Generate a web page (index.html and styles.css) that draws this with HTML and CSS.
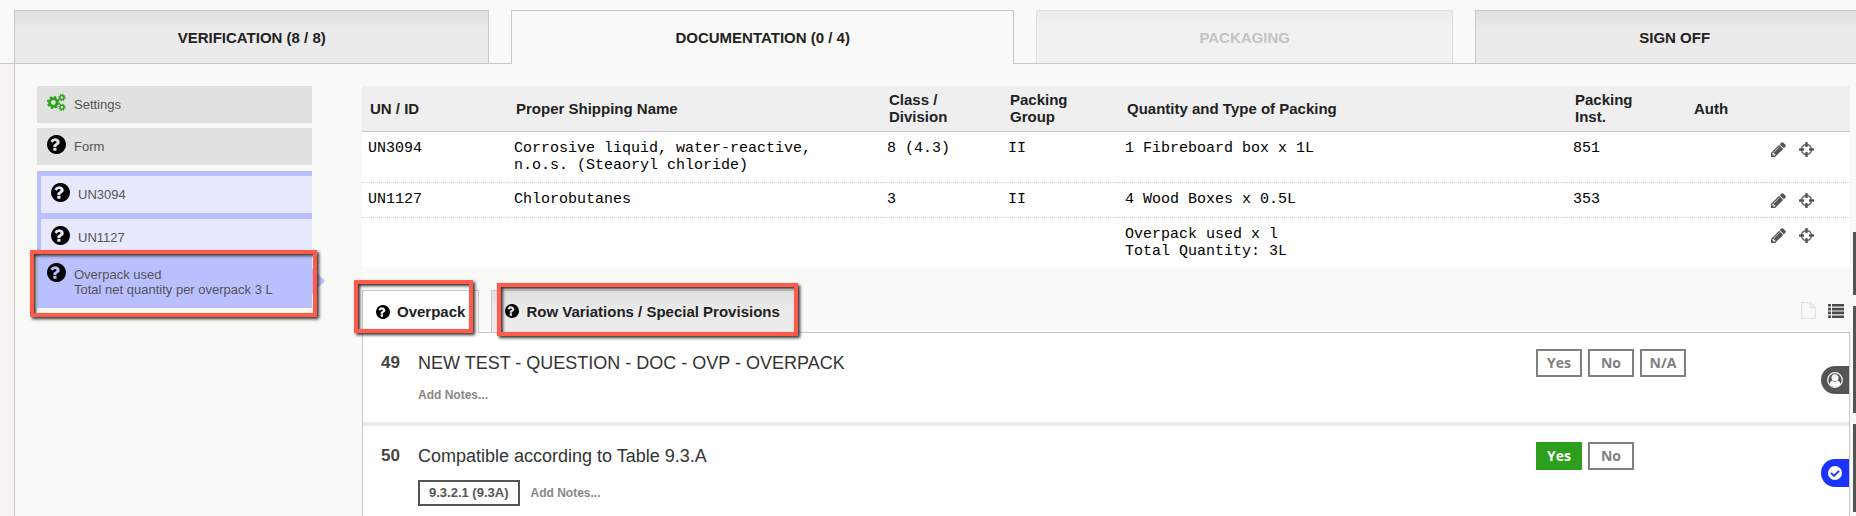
FILE: index.html
```
<!DOCTYPE html>
<html lang="en">
<head>
  <meta charset="UTF-8" />
  <title>Documentation</title>
  <link rel="stylesheet" href="styles.css">
</head>
<body>

  <!-- Icons -->
  <svg class="icon-defs" aria-hidden="true">
    <symbol id="i-question" viewBox="128 128 1536 1536">
      <path d="M896 1376v-192q0-14-9-23t-23-9h-192q-14 0-23 9t-9 23v192q0 14 9 23t23 9h192q14 0 23-9t9-23zm256-672q0-88-55.500-163t-138.500-116-170-41q-243 0-371 213-15 24 8 42l132 100q7 6 19 6 16 0 25-12 53-68 86-92 34-24 86-24 48 0 85.500 26t37.500 59q0 38-20 61t-68 45q-63 28-115.500 86.500t-52.500 125.500v36q0 14 9 23t23 9h192q14 0 23-9t9-23q0-19 21.500-49.500t54.500-49.500q32-18 49-28.500t46-35 44.500-48 28-60.500 12.500-81zm512 192q0 209-103 385.500t-279.500 279.500-385.500 103-385.500-103-279.500-279.500-103-385.500 103-385.500 279.500-279.500 385.500-103 385.500 103 279.500 279.500 103 385.500z"/>
    </symbol>
    <symbol id="i-pencil" viewBox="128 128 1536 1536">
      <path d="M491 1536l91-91-235-235-91 91v107h128v128h107zm523-928q0-22-22-22-10 0-17 7l-542 542q-7 7-7 17 0 22 22 22 10 0 17-7l542-542q7-7 7-17zm-54-192l416 416-832 832h-416v-416zm683 96q0 53-37 90l-166 166-416-416 166-165q36-38 90-38 53 0 91 38l235 234q37 39 37 91z"/>
    </symbol>
    <symbol id="i-target" viewBox="128 128 1536 1536">
      <path d="M1325 1024h-109q-26 0-45-19t-19-45v-128q0-26 19-45t45-19h109q-32-108-112.500-188.500t-188.500-112.500v109q0 26-19 45t-45 19h-128q-26 0-45-19t-19-45v-109q-108 32-188.500 112.500t-112.500 188.500h109q26 0 45 19t19 45v128q0 26-19 45t-45 19h-109q32 108 112.500 188.500t188.500 112.500v-109q0-26 19-45t45-19h128q26 0 45 19t19 45v109q108-32 188.500-112.500t112.500-188.500zm339-192v128q0 26-19 45t-45 19h-143q-37 161-154.500 278.500t-278.500 154.500v143q0 26-19 45t-45 19h-128q-26 0-45-19t-19-45v-143q-161-37-278.500-154.500t-154.500-278.500h-143q-26 0-45-19t-19-45v-128q0-26 19-45t45-19h143q37-161 154.500-278.500t278.500-154.500v-143q0-26 19-45t45-19h128q26 0 45 19t19 45v143q161 37 278.500 154.500t154.500 278.500h143q26 0 45 19t19 45z"/>
    </symbol>
    <symbol id="i-cogs" viewBox="0 0 21 19">
      <g fill="none" stroke="currentColor">
        <circle cx="7" cy="9.500" r="4.200" stroke-width="3"/>
        <circle cx="7" cy="9.500" r="6.200" stroke-width="2" stroke-dasharray="2.430 2.440"/>
        <circle cx="16.500" cy="4" r="2.200" stroke-width="1.600"/>
        <circle cx="16.500" cy="4" r="3.400" stroke-width="1.400" stroke-dasharray="1.330 1.340"/>
        <circle cx="16.500" cy="14.800" r="2.200" stroke-width="1.600"/>
        <circle cx="16.500" cy="14.800" r="3.400" stroke-width="1.400" stroke-dasharray="1.330 1.340"/>
      </g>
    </symbol>
    <symbol id="i-file" viewBox="0 0 15 17">
      <path d="M.7 .7h8.600l5 5v10.600H.7zM9.300 .7v5h5" fill="none" stroke="currentColor" stroke-width="1.300"/>
    </symbol>
    <symbol id="i-list" viewBox="0 0 16 14">
      <path d="M0 0h3v2.600H0zM4 0h12v2.600H4zM0 3.800h3v2.600H0zM4 3.800h12v2.600H4zM0 7.600h3v2.600H0zM4 7.600h12v2.600H4zM0 11.400h3V14H0zM4 11.400h12V14H4z"/>
    </symbol>
    <symbol id="i-user" viewBox="0 0 16 16">
      <circle cx="8" cy="8" r="7.300" fill="none" stroke="currentColor" stroke-width="1.200"/>
      <circle cx="8" cy="5.700" r="3.500"/>
      <path d="M2.600 12.300q.3-3.400 2.800-3.500 2.600 1.800 5.200 0 2.500.1 2.800 3.500Q11.300 15 8 15t-5.400-2.700z"/>
    </symbol>
    <symbol id="i-check" viewBox="0 0 14 14">
      <circle cx="7" cy="7" r="7"/>
      <path class="tick" d="M3 6.900l3 3 5-5"/>
    </symbol>
  </svg>

  <!-- Steps -->
  <nav class="steps">
    <a class="step" href="#verification">VERIFICATION (8 / 8)</a>
    <a class="step active" href="#documentation">DOCUMENTATION (0 / 4)</a>
    <a class="step disabled" href="#packaging">PACKAGING</a>
    <a class="step" href="#signoff">SIGN OFF</a>
  </nav>

  <div class="layout">
    <!-- Left menu -->
    <aside class="sidebar">
      <a class="side-item" href="#settings"><svg class="icon cogs"><use href="#i-cogs"/></svg><span>Settings</span></a>
      <a class="side-item" href="#form"><svg class="icon"><use href="#i-question"/></svg><span>Form</span></a>
      <div class="group">
        <a class="side-item" href="#un3094"><svg class="icon"><use href="#i-question"/></svg><span>UN3094</span></a>
        <a class="side-item" href="#un1127"><svg class="icon"><use href="#i-question"/></svg><span>UN1127</span></a>
      </div>
      <a class="side-item current" href="#overpack">
        <svg class="icon"><use href="#i-question"/></svg>
        <span>Overpack used<br>Total net quantity per overpack 3 L</span>
        <i class="mark mark-side"></i>
      </a>
    </aside>

    <main class="content">
      <table class="goods">
        <colgroup>
          <col class="c-un"><col class="c-name"><col class="c-class"><col class="c-group"><col><col class="c-inst"><col class="c-auth"><col class="c-tools">
        </colgroup>
        <thead>
          <tr>
            <th>UN / ID</th>
            <th>Proper Shipping Name</th>
            <th>Class /<br>Division</th>
            <th>Packing<br>Group</th>
            <th>Quantity and Type of Packing</th>
            <th>Packing<br>Inst.</th>
            <th>Auth</th>
            <th></th>
          </tr>
        </thead>
        <tbody>
          <tr>
            <td>UN3094</td>
            <td>Corrosive liquid, water-reactive,<br>n.o.s. (Steaoryl chloride)</td>
            <td>8 (4.3)</td>
            <td>II</td>
            <td>1 Fibreboard box x 1L</td>
            <td>851</td>
            <td></td>
            <td>
              <div class="tools">
                <button aria-label="Edit"><svg><use href="#i-pencil"/></svg></button>
                <button aria-label="Locate"><svg><use href="#i-target"/></svg></button>
              </div>
            </td>
          </tr>
          <tr>
            <td>UN1127</td>
            <td>Chlorobutanes</td>
            <td>3</td>
            <td>II</td>
            <td>4 Wood Boxes x 0.5L</td>
            <td>353</td>
            <td></td>
            <td>
              <div class="tools">
                <button aria-label="Edit"><svg><use href="#i-pencil"/></svg></button>
                <button aria-label="Locate"><svg><use href="#i-target"/></svg></button>
              </div>
            </td>
          </tr>
          <tr>
            <td></td>
            <td></td>
            <td></td>
            <td></td>
            <td>Overpack used x l<br>Total Quantity: 3L</td>
            <td></td>
            <td></td>
            <td>
              <div class="tools">
                <button aria-label="Edit"><svg><use href="#i-pencil"/></svg></button>
                <button aria-label="Locate"><svg><use href="#i-target"/></svg></button>
              </div>
            </td>
          </tr>
        </tbody>
      </table>

      <!-- Question tabs -->
      <div class="tabs">
        <button class="tab active"><svg><use href="#i-question"/></svg>Overpack<i class="mark mark-overpack"></i></button>
        <button class="tab tab-row"><svg><use href="#i-question"/></svg>Row Variations / Special Provisions<i class="mark mark-row"></i></button>
        <div class="views">
          <button class="view-file" aria-label="Document"><svg><use href="#i-file"/></svg></button>
          <button class="view-list" aria-label="List"><svg><use href="#i-list"/></svg></button>
        </div>
      </div>

      <div class="panel">
        <section class="question">
          <div class="number">49</div>
          <div class="text">
            <div class="title">NEW TEST - QUESTION - DOC - OVP - OVERPACK</div>
            <div class="notes"><a href="#notes49">Add Notes...</a></div>
          </div>
          <div class="answers">
            <button>Yes</button>
            <button>No</button>
            <button>N/A</button>
          </div>
          <div class="status"><svg><use href="#i-user"/></svg></div>
        </section>
        <section class="question">
          <div class="number">50</div>
          <div class="text">
            <div class="title">Compatible according to Table 9.3.A</div>
            <div class="notes"><button class="ref">9.3.2.1 (9.3A)</button><a href="#notes50">Add Notes...</a></div>
          </div>
          <div class="answers">
            <button class="yes">Yes</button>
            <button>No</button>
          </div>
          <div class="status done"><svg><use href="#i-check"/></svg></div>
        </section>
      </div>
    </main>
  </div>

  <!-- Drawer handles on the window edge -->
  <div class="handles">
    <div class="handle h-top"></div>
    <div class="handle h-mid"></div>
    <div class="handle h-low"></div>
  </div>

</body>
</html>
```
FILE: styles.css
```
* {
  box-sizing: border-box;
}

body {
  margin: 0;
  height: 100vh;
  display: flex;
  flex-direction: column;
  overflow: hidden;
  position: relative;
  font-family: "Liberation Sans", Arial, sans-serif;
  font-size: 13px;
  color: #222;
  background: #f4f3ef;
}

a {
  color: inherit;
  text-decoration: none;
}

button {
  font: inherit;
  color: inherit;
  background: none;
  border: none;
  padding: 0;
  cursor: pointer;
}

svg {
  display: block;
  fill: currentColor;
  flex: none;
}

.icon-defs {
  position: absolute;
  width: 0;
  height: 0;
}

/* Steps */
.steps {
  display: grid;
  grid-template-columns: 476fr 503fr 418fr 399fr;
  gap: 22px;
  padding: 10px 0 0 14px;
  /* the last step runs off the right edge */
  margin-right: -18px;
  background: #f9f9f7;
  border-bottom: 1px solid #c8c8c8;
}

.step {
  height: 53px;
  line-height: 54px;
  text-align: center;
  font-size: 15px;
  font-weight: bold;
  border: 1px solid #c8c8c8;
  border-bottom: none;
  background: linear-gradient(#dfdfdf, #ebebeb 18px);
}

.step.active {
  height: 54px;
  margin-bottom: -1px;
  background: #f9f9f7;
}

.step.disabled {
  color: #c4c4c4;
  border-color: #e0e0de;
  background: linear-gradient(#ebebea, #f1f1ef 18px);
}

.layout {
  flex: 1;
  display: flex;
  gap: 50px;
  margin-left: 14px;
  padding: 22px 6px 0 22px;
  border-left: 1px solid #c8c8c8;
  background: #f9f9f7;
}

/* Left menu */
.sidebar {
  width: 275px;
  flex: none;
  color: #555;
  line-height: 15px;
}

.side-item {
  display: flex;
  align-items: flex-start;
  gap: 8px;
  height: 37px;
  padding: 7px 10px;
  margin-bottom: 5px;
  background: #e1e1e1;
}

.side-item span {
  padding-top: 4px;
}

.icon {
  width: 19px;
  height: 19px;
  color: #000;
}

.icon.cogs {
  color: #2ca01c;
}

.group {
  display: grid;
  gap: 6px;
  margin-top: 6px;
  padding: 5px 0 0 4px;
  background: #b9bfff;
}

.group .side-item {
  margin: 0;
  background: #e7eaff;
}

.side-item.current {
  position: relative;
  height: 52px;
  background: #b9bfff;
}

.side-item.current::after {
  content: '';
  position: absolute;
  left: 100%;
  top: 12px;
  border: 13px solid transparent;
  border-left-color: #b9bfff;
  border-right: none;
}

/* Red highlight frames */
.mark {
  position: absolute;
  z-index: 2;
  border: 4px solid #ff5a4a;
  box-shadow: 2px 2px 3px #333, inset 2px 2px 3px #333;
  pointer-events: none;
}

.mark-side {
  inset: -6px -5px -9px -7px;
}

.mark-overpack {
  inset: -11px 5px 0 -9px;
}

.mark-row {
  inset: -8px 0 -4px 5px;
}

.content {
  flex: 1;
  min-width: 0;
  display: flex;
  flex-direction: column;
}

/* Goods table */
.goods {
  width: 100%;
  table-layout: fixed;
  border-collapse: collapse;
  line-height: 17px;
  font-size: 15px;
  background: #fff;
}

.c-un { width: 146px; }
.c-name { width: 373px; }
.c-class { width: 121px; }
.c-group { width: 117px; }
.c-inst { width: 119px; }
.c-auth { width: 79px; }
.c-tools { width: 85px; }

.goods th {
  height: 45px;
  padding: 0 0 0 8px;
  text-align: left;
  background: #efefef;
  border-bottom: 1px solid #c8c8c8;
}

.goods td {
  padding: 8px 0 7px 6px;
  vertical-align: top;
  font-family: "Liberation Mono", "Courier New", monospace;
  color: #000;
  border-bottom: 1px dotted #ccc;
}

.goods tr:first-child td {
  height: 51px;
}

.goods tr:nth-child(2) td {
  height: 35px;
}

.goods tr:last-child td {
  height: 49px;
  border-bottom: none;
}

.tools {
  display: flex;
  gap: 13px;
  padding-top: 2px;
  color: #555;
}

.tools svg {
  width: 15px;
  height: 15px;
}

/* Question tabs */
.tabs {
  display: flex;
  gap: 12px;
  margin-top: 23px;
}

.tab {
  position: relative;
  display: flex;
  align-items: center;
  gap: 7px;
  height: 42px;
  padding: 0 13px;
  font-size: 15px;
  font-weight: bold;
  border: 1px solid #c8c8c8;
  border-bottom: none;
  background: linear-gradient(#dfdfdf, #ebebeb 18px);
}

.tab-row {
  padding-right: 18px;
}

.tab svg {
  width: 14px;
  height: 14px;
  color: #000;
}

.tab.active {
  height: 43px;
  margin-bottom: -1px;
  z-index: 1;
  background: #fff;
}

.views {
  display: flex;
  align-items: center;
  gap: 12px;
  margin-left: auto;
  padding-right: 6px;
}

.view-file {
  color: #e2e2e2;
}

.view-file svg {
  width: 15px;
  height: 17px;
}

.view-list {
  color: #4a4a4a;
}

.view-list svg {
  width: 16px;
  height: 14px;
}

/* Questions */
.panel {
  flex: 1;
  background: #fff;
  border: 1px solid #c8c8c8;
  border-bottom: none;
}

.question {
  display: flex;
  height: 93px;
  padding: 16px 0 0 18px;
  border-bottom: 4px solid #eaeaea;
}

.question:last-child {
  height: auto;
  border-bottom: none;
}

.number {
  width: 37px;
  font-size: 17px;
  font-weight: bold;
  line-height: 28px;
  color: #444;
}

.text {
  flex: 1;
}

.title {
  font-size: 18px;
  line-height: 28px;
  color: #333;
}

.notes {
  display: flex;
  align-items: center;
  gap: 11px;
  height: 26px;
  margin-top: 10px;
  font-size: 12px;
  font-weight: bold;
  color: #888;
}

.question:first-child .notes {
  margin-top: 5px;
}

.ref {
  height: 26px;
  padding: 0 9px;
  font-size: 13px;
  border: 2px solid #555;
  color: #555;
}

.answers {
  display: flex;
  align-items: flex-start;
  gap: 6px;
  width: 285px;
}

.answers button {
  width: 46px;
  height: 28px;
  border: 2px solid #808080;
  font: bold 14px "Open Sans", sans-serif;
  color: #808080;
}

.answers .yes {
  border-color: #2ca01c;
  background: #2ca01c;
  color: #fff;
}

.status {
  display: flex;
  align-items: center;
  justify-content: center;
  width: 28px;
  height: 28px;
  margin-top: 17px;
  border-radius: 14px 0 0 14px;
  background: #555;
  color: #fff;
}

.status svg {
  width: 16px;
  height: 16px;
}

.status.done {
  background: #1c33ff;
}

.status.done svg {
  width: 14px;
  height: 14px;
}

.tick {
  fill: none;
  stroke: #1c33ff;
  stroke-width: 2;
}

/* Drawer handles */
.handles {
  position: absolute;
  top: 232px;
  right: 0;
  display: grid;
  gap: 11px;
}

.handle {
  width: 3px;
  background: #555;
}

.h-top { height: 63px; }
.h-mid { height: 107px; }
.h-low { height: 88px; }
```
